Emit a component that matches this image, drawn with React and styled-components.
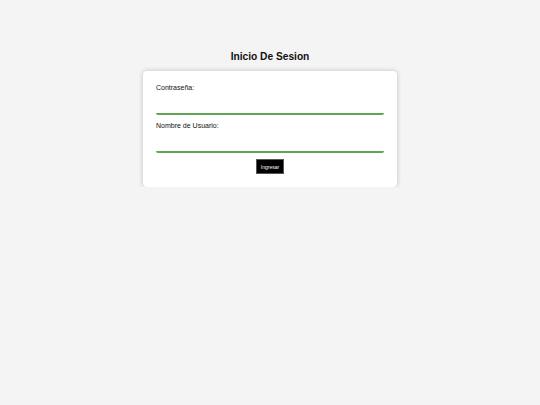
import styled, { createGlobalStyle } from "styled-components";

const GlobalStyle = createGlobalStyle`
  html, body {
    margin: 0;
    padding: 0;
    background: #f4f4f4;
    font-family: "Liberation Sans", Arial, sans-serif;
  }
`;

const Page = styled.main`
  display: flex;
  flex-direction: column;
  align-items: center;
  padding-top: 50px;
`;

const Title = styled.h1`
  margin: 0 0 7px;
  font-size: 10.2px;
  line-height: 14px;
  font-weight: 700;
  color: #111;
`;

const Card = styled.form`
  width: 254px;
  box-sizing: border-box;
  padding: 12px 13px 13px;
  background: #fff;
  border-radius: 4px;
  box-shadow: 0 0 5px rgba(0, 0, 0, 0.22);
  display: flex;
  flex-direction: column;
`;

const Label = styled.label`
  display: block;
  font-size: 7px;
  line-height: 10px;
  color: #111;
`;

const Input = styled.input`
  display: block;
  width: 100%;
  box-sizing: border-box;
  height: 18px;
  margin: 4px 0 ${(p) => p.$after}px;
  border: none;
  border-bottom: 2px solid #5fa653;
  border-radius: 2px;
  outline: none;
  background: transparent;
  font-size: 8px;
`;

const Button = styled.button`
  align-self: center;
  height: 15px;
  padding: 0 4px;
  background: #000;
  color: #fff;
  border: 1px solid #555;
  font-family: "Liberation Sans", Arial, sans-serif;
  font-size: 5px;
  cursor: pointer;
`;

export default function App() {
  return (
    <>
      <GlobalStyle />
      <Page>
        <Title>Inicio De Sesion</Title>
        <Card onSubmit={(e) => e.preventDefault()}>
          <Label>Contraseña:</Label>
          <Input type="password" $after={6} />
          <Label>Nombre de Usuario:</Label>
          <Input type="text" $after={6} />
          <Button type="submit">Ingresar</Button>
        </Card>
      </Page>
    </>
  );
}
